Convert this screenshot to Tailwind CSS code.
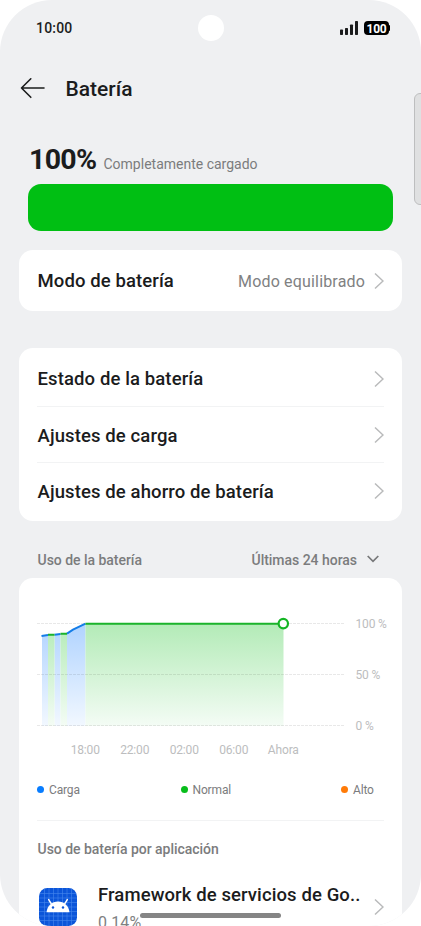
<!DOCTYPE html>
<html lang="es">
<head>
<meta charset="utf-8">
<title>Batería</title>
<script src="https://cdn.jsdelivr.net/npm/@tailwindcss/browser@4"></script>
</head>
<body class="bg-white">
<div class="relative h-[926px] w-[421px] overflow-hidden rounded-[52px] bg-[#eff0f2] font-['Roboto','Liberation_Sans',sans-serif] text-[#1b1c1d]">
  <!-- Camera cutout and edge panel handle -->
  <div class="absolute left-[198px] top-[15px] size-[26px] rounded-full bg-white"></div>
  <div class="absolute left-[414px] top-[93px] h-[112px] w-[14px] rounded-[6px] border border-[#bdbebf] bg-[#dfe0e1]"></div>

  <header class="flex h-[56px] items-center justify-between pl-[36px] pr-[31px]">
    <span class="text-[14px] font-medium leading-none tracking-[0.2px]">10:00</span>
    <div class="flex items-center gap-[6px]">
      <svg class="h-[14px] w-[18px]" viewBox="0 0 18 14" fill="#1b1c1d"><rect x="0" y="8.5" width="3" height="5.5" rx=".7"/><rect x="5" y="7" width="3" height="7" rx=".7"/><rect x="10" y="3.5" width="3" height="10.5" rx=".7"/><rect x="15" y="0" width="3" height="14" rx=".7"/></svg>
      <div class="flex items-center">
        <span class="flex h-[14px] w-[25px] items-center justify-center rounded-[4px] bg-black pt-[1px] text-[12px] font-bold leading-[12px] tracking-[-0.3px] text-white">100</span>
        <span class="h-[6px] w-px rounded-r-sm bg-black"></span>
      </div>
    </div>
  </header>

  <div class="flex h-[64px] items-center pl-[20px]">
    <svg class="h-[22px] w-[26px]" viewBox="0 0 26 22" fill="none" stroke="#1b1c1d" stroke-width="1.6" stroke-linecap="round" stroke-linejoin="round"><path d="M24 11H1.5M10.800 1.800L1.500 11l9.300 9.300"/></svg>
    <h1 class="ml-[19.500px] pt-[2px] text-[21px] font-medium leading-none">Batería</h1>
  </div>

  <div class="flex h-[64px] items-baseline gap-[7px] pl-[29px] pt-[23.500px]">
    <span class="w-[67.500px] text-[28.500px] font-bold leading-[32px] tracking-[-0.7px]">100%</span>
    <span class="text-[14px] leading-[20px] text-[#7b7c7d]">Completamente cargado</span>
  </div>
  <div class="mx-[28px] h-[47px] rounded-[13px] bg-[#00bf13]"></div>

  <main class="mx-[19px]">
    <section class="mt-[19px] flex h-[61px] w-[383px] items-center rounded-[14px] bg-white pl-[18.5px] pr-[18.500px]">
      <span class="pt-[2px] text-[18.5px] font-medium tracking-[0.1px]">Modo de batería</span>
      <span class="ml-auto mr-[8.500px] pt-[2px] text-[16px] tracking-[0.17px] text-[#808182]">Modo equilibrado</span>
      <svg class="h-[18px] w-[10px]" viewBox="0 0 10 18" fill="none" stroke="#b9babb" stroke-width="1.5"><path d="M1 1.5L9 9l-8 7.5"/></svg>
    </section>

    <section class="mt-[37px] w-[383px] rounded-[14px] bg-white pb-[2px] pl-[18px] pr-[18.500px] pt-[2px] text-[18.5px] font-medium tracking-[0.11px]">
      <div class="flex h-[57px] items-center justify-between border-b border-[#f2f3f4] pl-[0.5px]"><span class="pt-[4px]">Estado de la batería</span><svg class="mt-[1px] h-[18px] w-[10px]" viewBox="0 0 10 18" fill="none" stroke="#b9babb" stroke-width="1.5"><path d="M1 1.5L9 9l-8 7.5"/></svg></div>
      <div class="flex h-[56px] items-center justify-between border-b border-[#f2f3f4] pl-[0.5px]"><span class="pt-[4px]">Ajustes de carga</span><svg class="h-[18px] w-[10px]" viewBox="0 0 10 18" fill="none" stroke="#b9babb" stroke-width="1.5"><path d="M1 1.5L9 9l-8 7.5"/></svg></div>
      <div class="flex h-[56px] items-center justify-between pl-[0.5px]"><span class="pt-[3px]">Ajustes de ahorro de batería</span><svg class="h-[18px] w-[10px]" viewBox="0 0 10 18" fill="none" stroke="#b9babb" stroke-width="1.5"><path d="M1 1.5L9 9l-8 7.5"/></svg></div>
    </section>

    <div class="flex h-[57px] items-end pb-[8px] pl-[18.5px] pr-[23.500px] text-[14px] font-medium leading-[20px] tracking-[-0.03px] text-[#7b7c7d]">
      <span>Uso de la batería</span>
      <span class="ml-auto">Últimas 24 horas</span>
      <svg class="mb-[7px] ml-[9.500px] h-[8px] w-[12px]" viewBox="0 0 12 8" fill="none" stroke="#77787a" stroke-width="1.7"><path d="M.7 1L6 6.4 11.3 1"/></svg>
    </div>

    <section class="h-[360px] w-[383px] rounded-t-[14px] bg-white px-[18px]">
      <div class="flex h-[156px] pt-[36px]">
        <svg class="h-[120px] w-[308px] shrink-0" viewBox="37 614 308 120" fill="none">
          <defs>
            <linearGradient id="g" gradientUnits="userSpaceOnUse" x1="0" y1="624" x2="0" y2="726"><stop stop-color="#b3ebb7"/><stop offset="1" stop-color="#f4fcf5"/></linearGradient>
            <linearGradient id="b" gradientUnits="userSpaceOnUse" x1="0" y1="624" x2="0" y2="726"><stop stop-color="#b0d3ff"/><stop offset="1" stop-color="#f2f8ff"/></linearGradient>
          </defs>
          <path fill="url(#b)" d="M42 636l6-1v91h-6zM54.500 635l6-1v92h-6zM67 633.500l7-5 11.500-4.500v102H67z"/>
          <path fill="url(#g)" d="M48 635h6.500v91H48zM60.500 634H67v92h-6.500zM85.500 624h198v102h-198z"/>
          <path stroke="#000" stroke-opacity=".09" stroke-dasharray="3 1" d="M37 623.500h307M37 674.500h307M37 725.500h307"/>
          <path stroke="#147de8" stroke-width="2" d="M41.500 635.900l6.500-1M54.500 634.800l6-.9M67 633.700l6-4 12.500-6"/>
          <path stroke="#1bb32b" stroke-width="2" d="M48 634.800h6.500M60.500 633.700H67M85.500 623.700h194"/>
          <circle cx="283.300" cy="623.600" r="4.700" fill="#fff" stroke="#14b524" stroke-width="2.200"/>
        </svg>
        <div class="ml-[10.500px] flex flex-col gap-[37px] whitespace-nowrap pt-[3px] text-[12px] leading-[14px] tracking-[-0.15px] text-[#bcbdbe]"><span>100 %</span><span>50 %</span><span>0 %</span></div>
      </div>
      <div class="mt-[9px] flex pl-[23.500px] text-center text-[12px] leading-[14px] tracking-[-0.15px] text-[#bcbdbe]">
        <span class="w-[49.500px]">18:00</span><span class="w-[49.500px]">22:00</span><span class="w-[49.500px]">02:00</span><span class="w-[49.500px]">06:00</span><span class="w-[49.500px]">Ahora</span>
      </div>
      <div class="mt-[26px] grid h-[14px] grid-cols-[143.500px_160.500px_1fr] items-center text-[12px] leading-[14px] tracking-[-0.15px] text-[#7b7c7d]">
        <span class="flex items-center gap-[5px]"><i class="-mt-px size-[7px] rounded-full bg-[#087dff]"></i>Carga</span>
        <span class="flex items-center gap-[5px]"><i class="-mt-px size-[7px] rounded-full bg-[#08bd1b]"></i>Normal</span>
        <span class="flex items-center gap-[5px]"><i class="-mt-px size-[7px] rounded-full bg-[#ff7b08]"></i>Alto</span>
      </div>
      <div class="mt-[23px] border-t border-[#f2f3f4] pt-[18px] text-[14px] font-medium leading-[20px] tracking-[-0.03px] text-[#7b7c7d]"><span class="pl-[0.500px]">Uso de batería por aplicación</span></div>
      <div class="mt-[23px] flex items-start">
        <svg class="ml-[2px] mt-[6px] size-[38px] shrink-0" viewBox="0 0 38 38"><rect width="38" height="38" rx="8.500" fill="#0b55d9"/><path d="M5.500 1v36M10 0v38M14.500 0v38M19 0v38M23.500 0v38M28 0v38M32.500 1v36M1 5.500h36M0 10h38M0 14.500h38M0 19h38M0 23.500h38M0 28h38M1 32.500h36" stroke="#4788ed" stroke-width=".6"/><path d="M12.300 15.800L9.700 11.600M25.700 15.800l2.600-4.200" fill="none" stroke="#fff" stroke-width="1.500" stroke-linecap="round"/><path d="M7.500 24.300C8.200 17.600 13 13.500 19 13.500s10.800 4.100 11.500 10.800z" fill="#fff"/><circle cx="14" cy="19.500" r="1.200" fill="#0b55d9"/><circle cx="24" cy="19.500" r="1.200" fill="#0b55d9"/></svg>
        <div class="ml-[21px] flex flex-col whitespace-nowrap"><span class="text-[18.500px] font-medium leading-[26px] tracking-[0.1px]">Framework de servicios de Go..</span><span class="pt-[2px] text-[16px] leading-[26px] tracking-[0.05px] text-[#808182]">0.14%</span></div>
        <svg class="ml-auto mr-[0.500px] mt-[16px] h-[18px] w-[10px] shrink-0" viewBox="0 0 10 18" fill="none" stroke="#b9babb" stroke-width="1.5"><path d="M1 1.500L9 9l-8 7.500"/></svg>
      </div>
    </section>
  </main>
  <div class="absolute left-[140px] top-[913px] h-[5px] w-[141px] rounded-full bg-[#858585]"></div>
</div>
</body>
</html>
